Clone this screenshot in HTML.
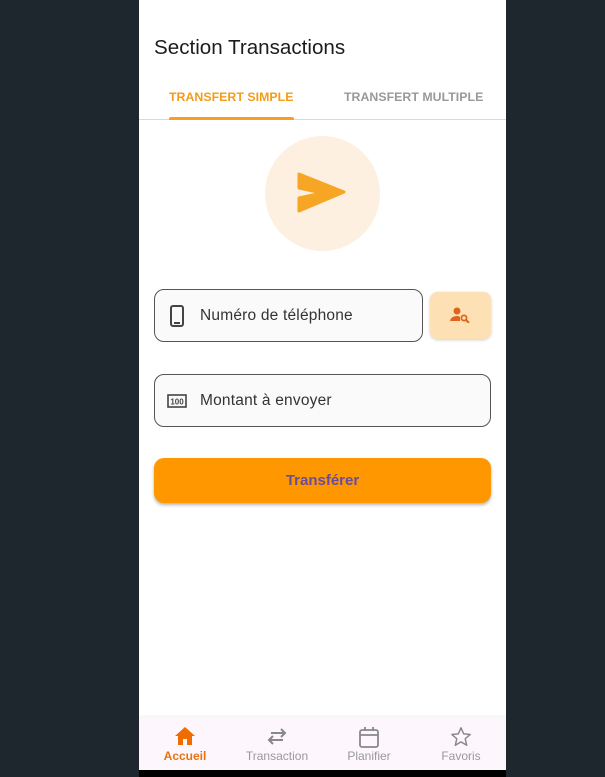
<!DOCTYPE html>
<html><head><meta charset="utf-8"><style>
*{margin:0;padding:0;box-sizing:border-box}
body{width:605px;height:777px;background:#1f272e;font-family:"Liberation Sans",sans-serif;position:relative;overflow:hidden}
.ph{position:absolute;left:139px;top:0;width:367px;height:770px;background:#fff}
.blk{position:absolute;left:139px;top:770px;width:367px;height:7px;background:#000}
.t{position:absolute;left:15px;top:36px;font-size:20.6px;color:#1c1c1c}
.tab{position:absolute;top:90px;font-size:12.3px;font-weight:bold;letter-spacing:.05px}
.line{position:absolute;left:0;top:119px;width:367px;height:1px;background:#d8d8de}
.ind{position:absolute;left:30px;top:117px;width:125px;height:3px;background:#f7a01f;border-radius:2px 2px 0 0}
.circ{position:absolute;left:126px;top:136px;width:115px;height:115px;border-radius:50%;background:#fdf0e0}
.field{position:absolute;border:1.3px solid #555;border-radius:10px;background:#fafafa}
.field span{position:absolute;left:45px;font-size:15.5px;color:#333;letter-spacing:.2px}
.btn{position:absolute;left:15px;top:458px;width:337px;height:45px;background:#ff9800;border-radius:10px;box-shadow:0 2px 3px rgba(0,0,0,.3);text-align:center;line-height:46px;font-weight:bold;color:#6a4d9a;font-size:15px}
.nav{position:absolute;left:0;top:717px;width:367px;height:53px;background:#fdf6fd;box-shadow:0 -1px 2px rgba(0,0,0,.06)}
.ni{position:absolute;top:0;width:92px;text-align:center}
.ni svg{position:absolute;top:9px;left:34px}
.ni span{position:absolute;top:32px;left:0;width:92px;font-size:12px;color:#999}
</style></head><body>
<div class="ph">
<div class="t">Section Transactions</div>
<div class="tab" style="left:30px;color:#f39c19">TRANSFERT SIMPLE</div>
<div class="tab" style="left:205px;color:#999">TRANSFERT MULTIPLE</div>
<div class="line"></div><div class="ind"></div>
<div class="circ"><svg width="115" height="115" viewBox="0 0 115 115"><path d="M34 38 L79 56 L34 75 L34 62 L57 57 L34 52 Z" fill="#f7a524" stroke="#f7a524" stroke-width="3" stroke-linejoin="round"/></svg></div>
<div class="field" style="left:15px;top:289px;width:269px;height:53px"><svg style="position:absolute;left:14px;top:15px" width="16" height="22" viewBox="0 0 16 22"><rect x="2" y="1" width="12" height="20" rx="2" fill="none" stroke="#444" stroke-width="2"/><rect x="5" y="17" width="6" height="2" fill="#444"/></svg><span style="top:17px">Numéro de téléphone</span></div>
<div style="position:absolute;left:291px;top:292px;width:61px;height:47px;background:#fde0b4;border-radius:8px;box-shadow:0 1px 3px rgba(0,0,0,.2)"><svg style="position:absolute;left:20px;top:15px" width="20" height="16" viewBox="0 0 20 16"><circle cx="7" cy="4" r="3.5" fill="#e0641c"/><path d="M0 14 Q1 9 7 9 Q9 9 10 10 L10 14 Z" fill="#e0641c"/><circle cx="14" cy="11" r="2.6" fill="none" stroke="#e0641c" stroke-width="1.8"/><path d="M16 13 L19 16" stroke="#e0641c" stroke-width="2"/></svg></div>
<div class="field" style="left:15px;top:374px;width:337px;height:53px"><svg style="position:absolute;left:12px;top:19px" width="20" height="14" viewBox="0 0 20 14"><rect x="1" y="1" width="18" height="12" fill="none" stroke="#444" stroke-width="1.6"/><text x="10" y="10.5" font-size="8" font-weight="bold" text-anchor="middle" fill="#444" font-family="Liberation Sans">100</text></svg><span style="top:17px">Montant à envoyer</span></div>
<div class="btn">Transférer</div>
<div class="nav">
<div class="ni" style="left:0"><svg width="24" height="20" viewBox="0 0 24 20"><path d="M12 1 L2 10 L5 10 L5 19 L10 19 L10 13 L14 13 L14 19 L19 19 L19 10 L22 10 Z" fill="#ef6c00"/></svg><span style="color:#e8730f;font-weight:bold">Accueil</span></div>
<div class="ni" style="left:92px"><svg width="24" height="20" viewBox="0 0 24 20"><path d="M6 7 H20 M16 3 L20 7 L16 11" fill="none" stroke="#888" stroke-width="2"/><path d="M18 14 H4 M8 10 L4 14 L8 18" fill="none" stroke="#888" stroke-width="2"/></svg><span>Transaction</span></div>
<div class="ni" style="left:184px"><svg width="24" height="24" viewBox="0 0 24 24"><rect x="3" y="4" width="18" height="17" rx="2" fill="none" stroke="#888" stroke-width="1.8"/><path d="M3 9 H21 M8 1 V5 M16 1 V5" stroke="#888" stroke-width="1.8"/></svg><span>Planifier</span></div>
<div class="ni" style="left:276px"><svg width="24" height="22" viewBox="0 0 24 24"><path d="M12 2 L14.9 8.6 L22 9.2 L16.6 13.9 L18.2 21 L12 17.3 L5.8 21 L7.4 13.9 L2 9.2 L9.1 8.6 Z" fill="none" stroke="#888" stroke-width="1.6" stroke-linejoin="round"/></svg><span>Favoris</span></div>
</div>
</div>
<div class="blk"></div>
</body></html>
